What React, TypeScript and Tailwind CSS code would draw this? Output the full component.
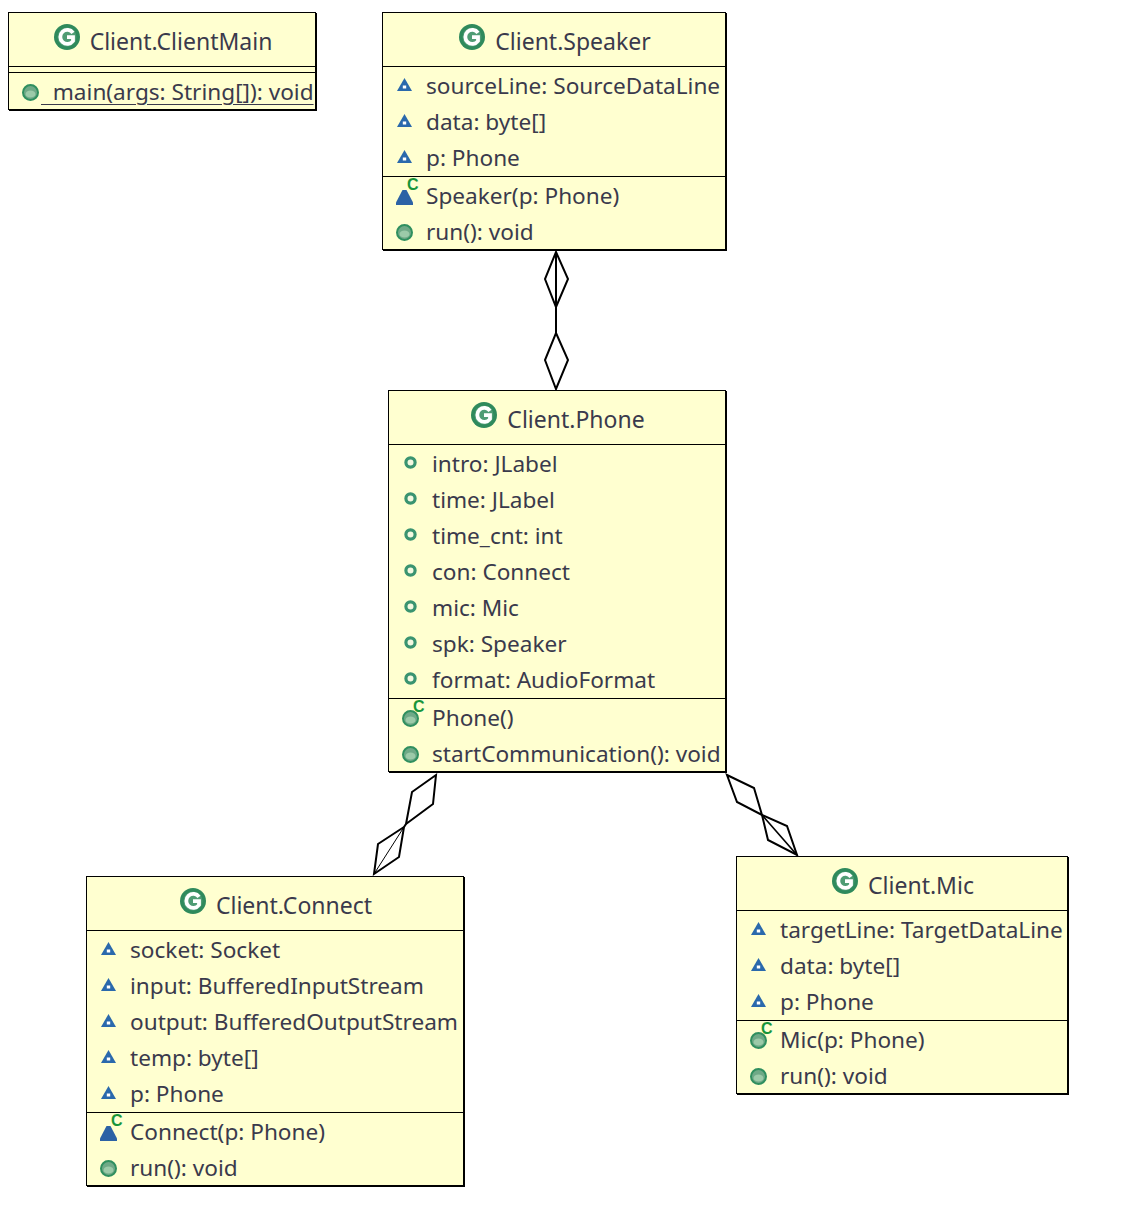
import type { ReactNode } from 'react'

type Row = { text: string; icon: 'package' | 'field' | 'method' | 'packageCtor' | 'methodCtor'; underline?: boolean }

type UmlClass = {
  name: string
  pos: string
  fields: Row[]
  methods: Row[]
}

function ClassIcon() {
  return (
    <svg width="26" height="26" viewBox="0 0 26 26" className="shrink-0">
      <circle cx="13" cy="13" r="13" fill="#2f8a5c" />
      <circle cx="13" cy="13" r="9.5" fill="#4f9c74" />
      <path d="M19 8.8 A7 7 0 1 0 19 17 L19 13.2 L13 13.2" fill="none" stroke="#ffffff" strokeWidth="3.8" />
    </svg>
  )
}

function MethodDot() {
  return (
    <svg width="17" height="17" viewBox="0 0 17 17">
      <circle cx="8.5" cy="8.5" r="7.5" fill="#6fa987" stroke="#2f8f5f" strokeWidth="2" />
      <ellipse cx="8.5" cy="10" rx="5" ry="3.6" fill="#9ccaa9" />
    </svg>
  )
}

function FieldDot() {
  return (
    <svg width="13" height="13" viewBox="0 0 13 13" className="mb-1">
      <circle cx="6.5" cy="6.5" r="4.6" fill="#f4f8e0" stroke="#3a9470" strokeWidth="3.2" />
    </svg>
  )
}

function PackageTri() {
  return (
    <svg width="15" height="13" viewBox="0 0 15 13" className="mb-1">
      <path d="M7.5 0 L15 13 L0 13 Z" fill="#2a69ac" />
      <path d="M5.8 7.5 H9.2 V10.5 H5.8 Z" fill="#ffffff" />
    </svg>
  )
}

function PackageSolid() {
  return (
    <svg width="17" height="15" viewBox="0 0 17 15" className="mt-[2px]">
      <path d="M6.5 0 H10.5 L17 12.5 V15 H0 V12.5 Z" fill="#2c62a5" />
    </svg>
  )
}

function CtorBadge({ children }: { children: ReactNode }) {
  return (
    <div className="relative flex h-full w-full items-center justify-center">
      {children}
      <span className="absolute left-[24px] top-[-1px] text-[16px] leading-[16px] font-bold text-[#17953a] font-['Liberation_Sans',sans-serif]">
        C
      </span>
    </div>
  )
}

function RowIcon({ icon }: { icon: Row['icon'] }) {
  if (icon === 'package') return <PackageTri />
  if (icon === 'field') return <FieldDot />
  if (icon === 'method') return <MethodDot />
  if (icon === 'packageCtor') {
    return (
      <CtorBadge>
        <PackageSolid />
      </CtorBadge>
    )
  }
  return (
    <CtorBadge>
      <MethodDot />
    </CtorBadge>
  )
}

function ClassRow({ row }: { row: Row }) {
  return (
    <div className="flex h-9 items-center">
      <div className="flex h-full w-[43px] shrink-0 items-center justify-center pr-px">
        <RowIcon icon={row.icon} />
      </div>
      {row.underline ? (
        <span className="mb-px ml-[-11px] whitespace-pre underline decoration-1 underline-offset-4">
          {'  ' + row.text}
        </span>
      ) : (
        <span className="mb-px whitespace-pre">{row.text}</span>
      )}
    </div>
  )
}

const classes: UmlClass[] = [
  {
    name: 'Client.ClientMain',
    pos: 'left-[8px] top-[12px] w-[308px]',
    fields: [],
    methods: [{ text: 'main(args: String[]): void', icon: 'method', underline: true }],
  },
  {
    name: 'Client.Speaker',
    pos: 'left-[382px] top-[12px] w-[344px]',
    fields: [
      { text: 'sourceLine: SourceDataLine', icon: 'package' },
      { text: 'data: byte[]', icon: 'package' },
      { text: 'p: Phone', icon: 'package' },
    ],
    methods: [
      { text: 'Speaker(p: Phone)', icon: 'packageCtor' },
      { text: 'run(): void', icon: 'method' },
    ],
  },
  {
    name: 'Client.Phone',
    pos: 'left-[388px] top-[390px] w-[338px]',
    fields: [
      { text: 'intro: JLabel', icon: 'field' },
      { text: 'time: JLabel', icon: 'field' },
      { text: 'time_cnt: int', icon: 'field' },
      { text: 'con: Connect', icon: 'field' },
      { text: 'mic: Mic', icon: 'field' },
      { text: 'spk: Speaker', icon: 'field' },
      { text: 'format: AudioFormat', icon: 'field' },
    ],
    methods: [
      { text: 'Phone()', icon: 'methodCtor' },
      { text: 'startCommunication(): void', icon: 'method' },
    ],
  },
  {
    name: 'Client.Connect',
    pos: 'left-[86px] top-[876px] w-[378px]',
    fields: [
      { text: 'socket: Socket', icon: 'package' },
      { text: 'input: BufferedInputStream', icon: 'package' },
      { text: 'output: BufferedOutputStream', icon: 'package' },
      { text: 'temp: byte[]', icon: 'package' },
      { text: 'p: Phone', icon: 'package' },
    ],
    methods: [
      { text: 'Connect(p: Phone)', icon: 'packageCtor' },
      { text: 'run(): void', icon: 'method' },
    ],
  },
  {
    name: 'Client.Mic',
    pos: 'left-[736px] top-[856px] w-[332px]',
    fields: [
      { text: 'targetLine: TargetDataLine', icon: 'package' },
      { text: 'data: byte[]', icon: 'package' },
      { text: 'p: Phone', icon: 'package' },
    ],
    methods: [
      { text: 'Mic(p: Phone)', icon: 'methodCtor' },
      { text: 'run(): void', icon: 'method' },
    ],
  },
]

function ClassBox({ cls }: { cls: UmlClass }) {
  return (
    <div className={`absolute ${cls.pos} border border-black bg-[#ffffd0] shadow-[1px_1px_0_#000]`}>
      <div className="flex h-[53px] items-start justify-center gap-[10px] pl-[2px] pt-[11px] text-[23px]">
        <ClassIcon />
        <span className="mt-[1px] leading-[32px] whitespace-pre">{cls.name}</span>
      </div>
      <div className="min-h-[6px] border-t border-black pt-px">
        {cls.fields.map((row) => (
          <ClassRow key={row.text} row={row} />
        ))}
      </div>
      <div className="mb-[-1px] border-t border-black pt-px">
        {cls.methods.map((row) => (
          <ClassRow key={row.text} row={row} />
        ))}
      </div>
    </div>
  )
}

// aggregation links between the classes
function Links() {
  return (
    <svg width="1130" height="1213" viewBox="0 0 1130 1213" className="absolute left-0 top-0" fill="none" stroke="#000">
      <g strokeWidth="2">
        <path d="M556 252 L568 279 L556 307 L545 279 Z" />
        <path d="M556 333 L568 360 L556 389 L545 360 Z" />
        <path d="M556 252 L556 333" />
        <path d="M436 775 L412 792 L406 824 L433 804 Z" />
        <path d="M404 827 L378 844 L374 874 L399 857 Z" />
        <path d="M406 824 L404 827" />
        <path d="M727 775 L754 788 L762 815 L737 802 Z" />
        <path d="M762 815 L787 826 L797 855 L768 840 Z" />
      </g>
      <path d="M404 827 L374 874" strokeWidth="1" />
      <path d="M762 815 L797 855" strokeWidth="1.6" />
    </svg>
  )
}

export default function App() {
  return (
    <div className="relative h-[1213px] w-[1130px] overflow-hidden bg-white text-[22.6px] text-[#3a3a4c] font-['Noto_Sans',sans-serif]">
      <Links />
      {classes.map((cls) => (
        <ClassBox key={cls.name} cls={cls} />
      ))}
    </div>
  )
}
